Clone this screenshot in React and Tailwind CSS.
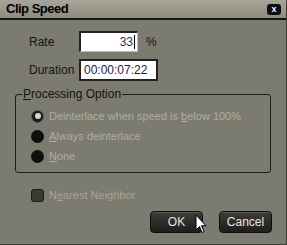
export default function App() {
  return (
    <div
      className="w-[287px] h-[245px] bg-[#7c7b6f] border-r border-b border-[#3e3d36] relative overflow-hidden text-[12px]"
      style={{ fontFamily: '"Liberation Sans", Arial, sans-serif' }}
    >
      <div className="h-[20px] bg-gradient-to-b from-[#a6a597] to-[#8c8b7e] flex items-center justify-between pl-[6px] pr-[5px] border-b-2 border-[#141411]">
        <span className="font-bold text-[13px] text-black tracking-[-0.5px]">Clip Speed</span>
        <span className="w-[14px] h-[11px] bg-[#0f0f0d] rounded-[3px] flex items-center justify-center text-white text-[9px] font-bold leading-none">
          x
        </span>
      </div>

      <div className="pl-[29px] pt-[11px]">
        <div className="flex items-center h-[21px]">
          <span className="w-[50px] text-[#141410]">Rate</span>
          <div className="w-[59px] h-[21px] bg-white border-t-2 border-l-2 border-[#222] border-r border-b border-r-[#bbb] border-b-[#bbb] flex items-center justify-end pr-[2px] text-[#2a2a7a]">
            33<span className="w-px h-[14px] bg-black ml-px" />
          </div>
          <span className="ml-[8px] text-[#141410]">%</span>
        </div>
        <div className="flex items-center h-[21px] mt-[7px]">
          <span className="w-[50px] text-[#141410]">Duration</span>
          <div className="w-[79px] h-[22px] bg-white border-2 border-[#222] flex items-center pl-[3px] text-[#1a1a5a]">
            00:00:07:22
          </div>
        </div>
      </div>

      <div className="mx-[15px] mt-[14px] h-[79px] border border-[#1c1c18] rounded-[3px] relative pl-[15px] pt-[11px]">
        <span className="absolute -top-[8px] left-[6px] bg-[#7c7b6f] px-[1px] text-[#141410] leading-[14px]">
          <span className="underline">P</span>rocessing Option
        </span>
        <div className="flex items-center h-[20px] gap-[5px]">
          <span className="w-[13px] h-[13px] rounded-full bg-[#1a1a18] flex items-center justify-center border border-[#555]">
            <span className="w-[6px] h-[6px] rounded-full bg-[#d8d8d0]" />
          </span>
          <span className="text-[#aeada3] whitespace-nowrap text-[11px]">
            Deinterlace when speed is <span className="underline">b</span>elow 100%
          </span>
        </div>
        <div className="flex items-center h-[20px] gap-[5px]">
          <span className="w-[13px] h-[13px] rounded-full bg-[#0f0f0e]" />
          <span className="text-[#aeada3] text-[11px]">
            <span className="underline">A</span>lways deinterlace
          </span>
        </div>
        <div className="flex items-center h-[20px] gap-[5px]">
          <span className="w-[13px] h-[13px] rounded-full bg-[#0f0f0e]" />
          <span className="text-[#aeada3] text-[11px]">
            <span className="underline">N</span>one
          </span>
        </div>
      </div>

      <div className="flex items-center pl-[31px] mt-[15px] gap-[5px] h-[14px]">
        <span className="w-[13px] h-[13px] rounded-[3px] bg-[#3a3a36] border border-[#1a1a18]" />
        <span className="text-[#a5a49a] text-[11px]">
          N<span className="underline">e</span>arest Neighbor
        </span>
      </div>

      <div className="flex justify-end gap-[16px] pr-[14px] mt-[9px]">
        <button className="w-[53px] h-[22px] rounded-[4px] bg-gradient-to-b from-[#3c3c38] to-[#1e1e1b] border border-[#0d0d0c] text-[#e6e6e0] shadow-[inset_0_1px_0_#5a5a54]">
          OK
        </button>
        <button className="w-[53px] h-[22px] rounded-[4px] bg-gradient-to-b from-[#3c3c38] to-[#1e1e1b] border border-[#0d0d0c] text-[#e6e6e0] shadow-[inset_0_1px_0_#5a5a54]">
          Cancel
        </button>
      </div>

      <svg className="absolute left-[195px] top-[214px]" width="13" height="20" viewBox="0 0 13 20">
        <path d="M1 1 L1 16 L4.5 12.5 L7 18.5 L9 17.5 L6.5 11.8 L11 11.8 Z" fill="white" stroke="black" strokeWidth="1" />
      </svg>
    </div>
  );
}
